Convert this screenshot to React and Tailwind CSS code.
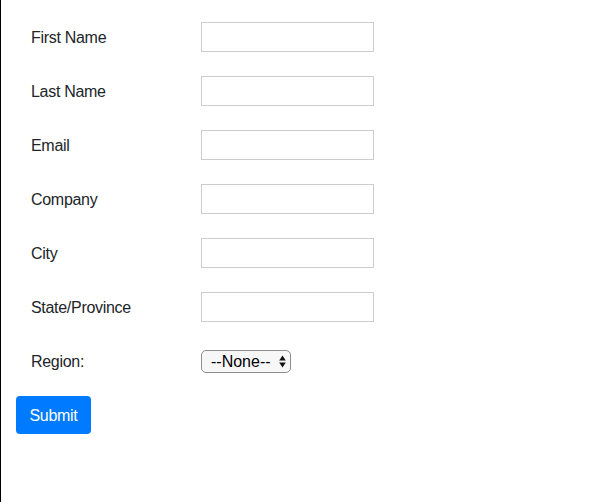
import React from 'react';

const fields = ['First Name', 'Last Name', 'Email', 'Company', 'City', 'State/Province'];

const App = () => {
  return (
    <div
      className="min-h-[502px] bg-white border-l border-black text-[#212529] text-base"
      style={{ fontFamily: '"Liberation Sans", Arial, sans-serif' }}
    >
      <form className="pt-[22px] pl-[15px]" onSubmit={(e) => e.preventDefault()}>
        {fields.map((label) => (
          <div key={label} className="flex items-center h-[30px] mb-[24px] pl-[15px]">
            <label className="w-[170px] shrink-0 pt-[2px] tracking-[-0.3px]">{label}</label>
            <input
              type="text"
              className="w-[173px] h-[30px] border border-[#cccccc] bg-white outline-none"
            />
          </div>
        ))}

        <div className="flex items-center h-[30px] mb-[20px] pl-[15px]">
          <label className="w-[170px] shrink-0 pt-[2px] tracking-[-0.3px]">Region:</label>
          <div className="relative w-[90px] h-[23px] mt-[1px]">
            <select className="appearance-none w-full h-full border border-[#8e8e8e] rounded-[5px] bg-[#f7f7f7] pl-[9px] pt-[1px] text-[16px] leading-[20px] text-black outline-none">
              <option>--None--</option>
            </select>
            <svg
              className="absolute right-[5px] top-[5px] pointer-events-none"
              width="7"
              height="13"
              viewBox="0 0 7 13"
            >
              <path d="M3.5 0.5 L6.8 5.5 L0.2 5.5 Z" fill="#111" />
              <path d="M3.5 12.5 L6.8 7.5 L0.2 7.5 Z" fill="#111" />
            </svg>
          </div>
        </div>

        <button
          type="submit"
          className="w-[75px] h-[38px] rounded-[4px] bg-[#007bff] text-white text-base pt-[1px] tracking-[-0.3px]"
        >
          Submit
        </button>
      </form>
    </div>
  );
};

export default App;
